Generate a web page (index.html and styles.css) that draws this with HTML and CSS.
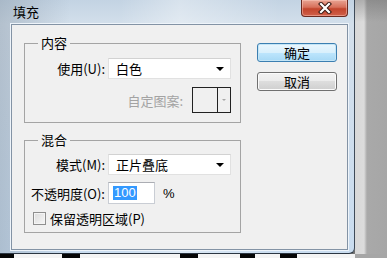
FILE: index.html
```html
<!DOCTYPE html>
<html lang="zh-CN">
<head>
<meta charset="utf-8">
<title>填充</title>
<link rel="stylesheet" href="styles.css">
</head>
<body>
<div class="screen">
  <div class="top">
    <div class="window">
      <div class="titlebar">
        <span class="title">填充</span>
        <div class="close">
          <svg width="14" height="12" viewBox="0 0 14 12">
            <path d="M3 2 L11 10 M11 2 L3 10" stroke="#3a1a14" stroke-width="4.2" stroke-linecap="square" fill="none"/>
            <path d="M3 2 L11 10 M11 2 L3 10" stroke="#ffffff" stroke-width="2.2" stroke-linecap="square" fill="none"/>
          </svg>
        </div>
      </div>
      <div class="client">
        <div class="groups">
          <fieldset class="group g1">
            <legend>内容</legend>
            <div class="grid">
              <span class="lbl">使用(U):</span>
              <div class="select"><span>白色</span><i class="arrow"></i></div>
            </div>
            <div class="pattern-row">
              <span class="lbl disabled">自定图案:</span>
              <div class="pattern"><span class="swatch"></span><span class="pdrop"><i class="arrow small"></i></span></div>
            </div>
          </fieldset>
          <fieldset class="group g2">
            <legend>混合</legend>
            <div class="grid">
              <span class="lbl">模式(M):</span>
              <div class="select"><span>正片叠底</span><i class="arrow"></i></div>
              <span class="lbl">不透明度(O):</span>
              <div class="opacity">
                <div class="input"><span class="sel">100</span></div>
                <span class="pct">%</span>
              </div>
            </div>
            <div class="check"><span class="box"></span><span>保留透明区域(P)</span></div>
          </fieldset>
        </div>
        <div class="buttons">
          <button class="btn default">确定</button>
          <button class="btn">取消</button>
        </div>
      </div>
    </div>
    <div class="gutter"></div>
  </div>
  <div class="bottom">
    <span class="blk b1"></span>
    <span class="blk b2"></span>
    <span class="blk b3"></span>
    <span class="blk b4"></span>
    <span class="blk b5"></span>
    <span class="gray"></span>
  </div>
</div>
</body>
</html>
```

FILE: styles.css
```css
* { box-sizing: border-box; }
html, body { margin: 0; padding: 0; }
body {
  width: 387px;
  height: 258px;
  overflow: hidden;
  background: #a7a7a7;
  font-family: "Noto Sans CJK SC", sans-serif;
  font-size: 13px;
  color: #000;
}
.screen { display: flex; flex-direction: column; width: 387px; height: 258px; }
.top { display: flex; height: 254px; }

.window {
  width: 355px;
  height: 254px;
  display: flex;
  flex-direction: column;
  background:
    linear-gradient(90deg, rgba(120,135,150,0.35) 0, rgba(255,255,255,0) 70px, rgba(255,255,255,0) 120px, rgba(255,255,255,0.35) 180px, rgba(255,255,255,0) 280px),
    linear-gradient(180deg, #c3d3e3 0, #d3dfeb 24px, #c9dcef 100%);
  border-right: 1px solid #3e4a58;
  border-bottom: 1px solid #2b3642;
  border-bottom-right-radius: 6px;
  box-shadow: 2px 2px 4px rgba(0,0,0,0.45);
}
.titlebar {
  height: 24px;
  display: flex;
  justify-content: space-between;
  align-items: flex-start;
  flex: none;
}
.title {
  padding-left: 13px;
  padding-top: 4px;
  line-height: 15px;
  font-size: 13px;
}
.close {
  width: 47px;
  height: 17px;
  margin-right: 6px;
  border: 1px solid #6b2a20;
  border-top: none;
  border-radius: 0 0 4px 4px;
  background: linear-gradient(180deg, #e8a493 0, #d7705b 45%, #c2442c 55%, #d0604a 100%);
  display: flex;
  align-items: center;
  justify-content: center;
  box-shadow: inset 0 0 0 1px rgba(255,210,200,0.45);
}
.close svg { display: block; }

.client {
  margin-left: 11px;
  width: 337px;
  height: 226px;
  background: #f0f0f0;
  border: 1px solid #8393a5;
  display: flex;
  padding-left: 12px;
  box-shadow: 0 0 0 1px #eef4fa;
}
.groups {
  width: 217px;
  padding-top: 11px;
  display: flex;
  flex-direction: column;
  gap: 10px;
}
.group {
  margin: 0;
  padding: 0 9px 0 0;
  border: 1px solid #a4a4a4;
  min-width: 0;
}
.group legend {
  margin-left: 13px;
  padding: 0 3px;
  line-height: 14px;
  font-size: 13px;
}
.g1 { padding-top: 8px; padding-bottom: 9px; }
.g2 { padding-top: 7px; padding-bottom: 6px; }

.grid {
  display: grid;
  grid-template-columns: 80px 123px;
  column-gap: 3px;
  row-gap: 7px;
  align-items: center;
}
.lbl {
  text-align: right;
  line-height: 15px;
  white-space: nowrap;
}
.disabled { color: #a3a3a3; }

.select {
  height: 21px;
  background: #fff;
  border: 1px solid #e1e1e1;
  border-top-color: #d2d2d2;
  display: flex;
  align-items: center;
  justify-content: space-between;
  padding: 0 6px 0 7px;
  line-height: 15px;
}
.arrow {
  display: block;
  width: 0;
  height: 0;
  border-left: 4px solid transparent;
  border-right: 4px solid transparent;
  border-top: 4px solid #000;
}
.arrow.small {
  border-left-width: 2px;
  border-right-width: 2px;
  border-top: 2px solid #a8a8a8;
}

.pattern-row {
  margin-top: 8px;
  display: flex;
  justify-content: flex-end;
  align-items: center;
  gap: 9px;
}
.pattern {
  width: 39px;
  height: 26px;
  border: 1px solid #222;
  display: flex;
  background: #f0f0f0;
}
.swatch { width: 25px; border-right: 1px solid #222; }
.pdrop { flex: 1; display: flex; align-items: center; justify-content: center; }

.opacity { display: flex; align-items: center; gap: 8px; }
.input {
  width: 47px;
  height: 22px;
  background: #fff;
  border: 1px solid #c9cdd4;
  border-top-color: #abadb3;
  display: flex;
  align-items: center;
  padding-left: 4px;
}
.sel {
  background: #3399ff;
  color: #fff;
  line-height: 14px;
  padding: 0 1px;
  font-family: "Liberation Sans", sans-serif;
  font-size: 13px;
}
.pct { font-family: "Liberation Sans", sans-serif; font-size: 13px; }

.check {
  margin-top: 7px;
  padding-left: 8px;
  display: flex;
  align-items: center;
  gap: 4px;
  line-height: 15px;
}
.box {
  width: 13px;
  height: 13px;
  border: 1px solid #8f8f8f;
  background: linear-gradient(135deg, #dcdcdc, #f6f6f6);
  box-shadow: inset 0 0 0 1px #f4f4f4;
}

.buttons {
  margin-left: 16px;
  padding-top: 18px;
  display: flex;
  flex-direction: column;
  gap: 10px;
}
.btn {
  width: 80px;
  height: 19px;
  padding: 0;
  font-family: "Noto Sans CJK SC", sans-serif;
  font-size: 13px;
  line-height: 15px;
  color: #000;
  border: 1px solid #707070;
  border-radius: 3px;
  background: linear-gradient(180deg, #f2f2f2 0, #ebebeb 50%, #dddddd 50%, #cfcfcf 100%);
  box-shadow: inset 0 0 0 1px #fbfbfb;
}
.btn.default {
  border-color: #3c7fb1;
  background: linear-gradient(180deg, #eaf6fd 0, #d9f0fc 50%, #bee6fd 50%, #a7d9f5 100%);
  box-shadow: inset 0 0 0 1px #c4e5f6;
}

.gutter {
  flex: 1;
  height: 254px;
  background:
    linear-gradient(180deg, rgba(90,90,90,0.35) 0, rgba(90,90,90,0) 22px),
    linear-gradient(90deg, #d8d8d8 0, #dcdcdc 9px, #a9a9a9 12px, #a6a6a6 100%);
}

.bottom {
  height: 4px;
  display: flex;
  background: #f4f4f4;
}
.blk { display: block; height: 4px; background: #050505; }
.b1 { width: 14px; }
.b2 { width: 18px; margin-left: 48px; }
.b3 { width: 18px; margin-left: 100px; }
.b4 { width: 15px; margin-left: 42px; }
.b5 { width: 17px; margin-left: 25px; }
.gray { margin-left: auto; width: 32px; background: #a6a6a6; }
```
